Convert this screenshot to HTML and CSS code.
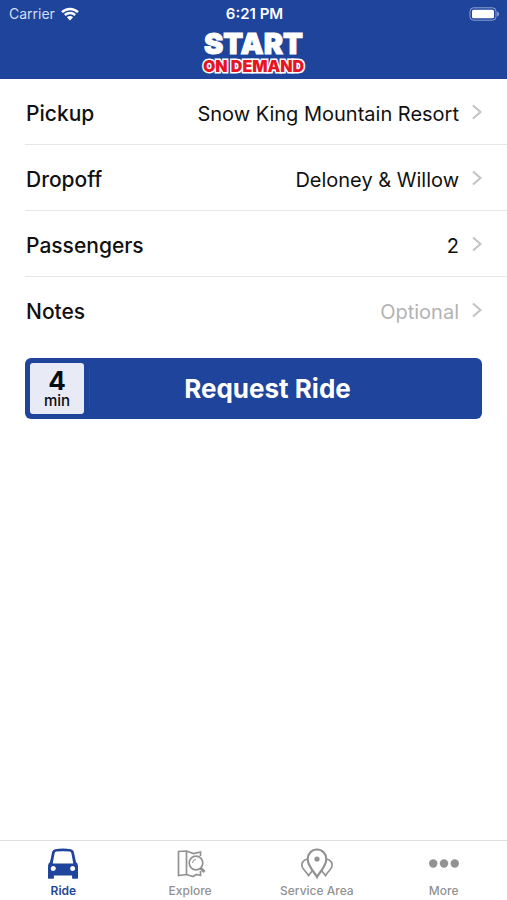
FILE: index.html
```html
<!DOCTYPE html>
<html lang="en">

<head>
    <meta charset="UTF-8">
    <meta name="viewport" content="width=device-width, initial-scale=1.0">
    <title>START On Demand</title>
    <link rel="stylesheet" href="styles.css">
</head>

<body>
    <header class="header">
        <!-- Status bar -->
        <div class="status">
            <div class="carrier">
                <span>Carrier</span>
                <svg class="wifi" viewBox="0 0 18 14" aria-hidden="true">
                    <path d="M1 5.2a11.6 11.6 0 0 1 16 0M3.8 8a7.6 7.6 0 0 1 10.4 0" />
                    <path class="wifi-dot" d="M9 13.6 5.9 10.3a4.4 4.4 0 0 1 6.2 0z" />
                </svg>
            </div>
            <span class="time">6:21 PM</span>
            <svg class="battery" viewBox="0 0 31 14" aria-hidden="true">
                <rect class="battery-case" x="1" y="0.8" width="26" height="12.4" rx="3.5" />
                <rect x="3" y="2.8" width="22" height="8.4" rx="1.5" />
                <path class="battery-tip" d="M28.2 4.5c2.4 1 2.4 4 0 5z" />
            </svg>
        </div>
        <h1 class="logo">
            <span class="logo-start">START</span>
            <span class="logo-demand">ON DEMAND</span>
        </h1>
    </header>

    <main class="main">
        <button class="row" type="button">
            <span class="label">Pickup</span>
            <span class="value">Snow King Mountain Resort</span>
            <svg class="chevron" viewBox="0 0 10 16" aria-hidden="true"><path d="M1 1.5 8.5 8 1 14.5" /></svg>
        </button>
        <button class="row" type="button">
            <span class="label">Dropoff</span>
            <span class="value">Deloney &amp; Willow</span>
            <svg class="chevron" viewBox="0 0 10 16" aria-hidden="true"><path d="M1 1.5 8.5 8 1 14.5" /></svg>
        </button>
        <button class="row" type="button">
            <span class="label">Passengers</span>
            <span class="value">2</span>
            <svg class="chevron" viewBox="0 0 10 16" aria-hidden="true"><path d="M1 1.5 8.5 8 1 14.5" /></svg>
        </button>
        <button class="row" type="button">
            <span class="label">Notes</span>
            <span class="value placeholder">Optional</span>
            <svg class="chevron" viewBox="0 0 10 16" aria-hidden="true"><path d="M1 1.5 8.5 8 1 14.5" /></svg>
        </button>

        <button class="request" type="button">
            <span class="eta">
                <span class="eta-number">4</span>
                <span class="eta-unit">min</span>
            </span>
            <span class="request-text">Request Ride</span>
        </button>
    </main>

    <!-- Tabs -->
    <nav class="tabs">
        <a class="tab active" href="#ride">
            <svg class="icon" viewBox="0 0 32 32" aria-hidden="true">
                <path class="solid" fill-rule="evenodd" d="M8 1.200Q16-.2 24 1.200 26.200 1.700 26.800 3.800L29 14Q31 15.500 31 18V30Q31 30.700 30.300 30.700H25.800Q25.100 30.700 25.100 30V27.500H6.900V30Q6.900 30.700 6.200 30.700H1.700Q1 30.700 1 30V18Q1 15.500 3 14L5.200 3.800Q5.800 1.700 8 1.200zM9.300 3.600Q7.900 3.900 7.600 5.200L5.700 15.500H26.300L24.400 5.200Q24.100 3.900 22.700 3.600 16 2.700 9.300 3.600zM6.300 18a2.500 2.500 0 1 0 0 5 2.500 2.500 0 0 0 0-5zM25.700 18a2.500 2.500 0 1 0 0 5 2.500 2.500 0 0 0 0-5z" />
            </svg>
            <span>Ride</span>
        </a>
        <a class="tab" href="#explore">
            <svg class="icon" viewBox="0 0 32 32" aria-hidden="true">
                <path d="M26.500 8V4L19.500 5.500 12.500 3 4.500 3.500V27.500L12.500 26.500 19 28.500 22.500 26.500 26.500 27.500V23" />
                <path d="M12.500 3V26.500" />
                <circle cx="22" cy="15" r="6.800" />
                <path d="M18.500 15a3.500 3.500 0 0 1 3.500-3.500" stroke-width="1" />
                <path d="M26.500 20 30.500 24" stroke-width="3" />
            </svg>
            <span>Explore</span>
        </a>
        <a class="tab" href="#service-area">
            <svg class="icon" viewBox="0 0 32 32" aria-hidden="true">
                <path stroke-width="2.200" d="M16 29C13.500 24 6.700 18.500 6.700 11a9.300 9.500 0 0 1 18.600 0C25.300 18.500 18.500 24 16 29z" />
                <path d="M7 11C2 11.500-.2 15.500 1.500 19.500 2.700 22 5.700 24.500 7.500 27.500L11.500 22.500M25 11c5 .5 7.200 4.500 5.500 8.500-1.200 2.500-4.200 5-6 8L20.500 22.500" />
                <circle class="solid" cx="16" cy="11" r="2.600" />
            </svg>
            <span>Service Area</span>
        </a>
        <a class="tab" href="#more">
            <svg class="icon" viewBox="0 0 32 32" aria-hidden="true">
                <g class="solid">
                    <circle cx="5.200" cy="15.500" r="4.200" />
                    <circle cx="16" cy="15.500" r="4.200" />
                    <circle cx="26.800" cy="15.500" r="4.200" />
                </g>
            </svg>
            <span>More</span>
        </a>
    </nav>
</body>

</html>
```
FILE: styles.css
```css
* {
    box-sizing: border-box;
}

body {
    display: flex;
    flex-direction: column;
    min-height: 100vh;
    margin: 0;
    background-color: #fff;
    color: #111;
    font-family: Inter, "Liberation Sans", sans-serif;
}

button {
    border: none;
    background: none;
    color: inherit;
    font-family: inherit;
    cursor: pointer;
}

.header {
    padding-bottom: 6px;
    background-color: #1f449b;
    color: #fff;
}

.status {
    display: grid;
    grid-template-columns: 1fr auto 1fr;
    align-items: center;
    height: 28px;
    padding: 0 7px 0 9px;
    font-size: 14px;
    line-height: 18px;
}

.carrier {
    display: flex;
    align-items: center;
    gap: 6px;
    color: #d5def2;
}

.wifi {
    width: 18px;
    height: 14px;
    fill: none;
    stroke: #fff;
    stroke-width: 2.4;
}

.wifi-dot {
    fill: #fff;
    stroke: none;
}

.time {
    font-size: 15px;
    font-weight: 600;
}

.battery {
    justify-self: end;
    width: 31px;
    height: 14px;
    fill: #fff;
}

.battery-case {
    fill: none;
    stroke: #8fa3d1;
}

.battery-tip {
    fill: #8fa3d1;
}

.logo {
    display: flex;
    flex-direction: column;
    align-items: center;
    margin: 0;
    font-weight: 900;
}

.logo-start {
    font-size: 29px;
    line-height: 31px;
    -webkit-text-stroke: 1px #fff;
}

.logo-demand {
    color: #e8141f;
    font-size: 16px;
    line-height: 14px;
    -webkit-text-stroke: 3px #fff;
    paint-order: stroke fill;
}

.main {
    flex: 1;
}

.row {
    display: flex;
    align-items: center;
    width: calc(100% - 25px);
    height: 66px;
    margin-left: 25px;
    padding: 1px 25px 0 0;
    border-bottom: 1px solid #e6e6e6;
    text-align: left;
}

.row:nth-child(4) {
    border-bottom-color: transparent;
}

.label,
.value {
    padding-top: 3px;
}

.label {
    flex: 1;
    padding-left: 1px;
    font-size: 21px;
    font-weight: 500;
}

.value {
    font-size: 20px;
}

.placeholder {
    color: #b3b3b3;
}

.chevron {
    width: 10px;
    height: 16px;
    margin-left: 13px;
    fill: none;
    stroke: #c2c2c5;
    stroke-width: 2;
}

.request {
    display: flex;
    align-items: center;
    width: calc(100% - 50px);
    height: 61px;
    margin: 15px 25px 0;
    padding: 5px;
    border-radius: 6px;
    background-color: #1f449b;
    color: #fff;
}

.eta {
    display: flex;
    flex-direction: column;
    align-items: center;
    justify-content: center;
    width: 54px;
    height: 51px;
    padding-top: 2px;
    border-radius: 3px;
    background-color: #e8ebf6;
    color: #080a12;
}

.eta-number {
    font-size: 26px;
    font-weight: 700;
    line-height: 22px;
}

.eta-unit {
    font-size: 15px;
    font-weight: 500;
    line-height: 18px;
}

.request-text {
    flex: 1;
    margin-left: 5px;
    padding-right: 32px;
    border-left: 1px solid #2a4ea3;
    font-size: 26px;
    font-weight: 700;
    line-height: 40px;
}

.tabs {
    display: grid;
    grid-template-columns: repeat(4, 1fr);
    height: 60px;
    border-top: 1px solid #dedede;
}

.tab {
    display: flex;
    flex-direction: column;
    align-items: center;
    padding-top: 7px;
    color: #929292;
    font-size: 12px;
    font-weight: 500;
    line-height: 16px;
    text-decoration: none;
}

.active {
    color: #1f449b;
    font-weight: 600;
}

.icon {
    width: 32px;
    height: 32px;
    margin-bottom: 3px;
    fill: none;
    stroke: currentColor;
    stroke-width: 1.7;
}

.solid {
    fill: currentColor;
    stroke: none;
}
```
